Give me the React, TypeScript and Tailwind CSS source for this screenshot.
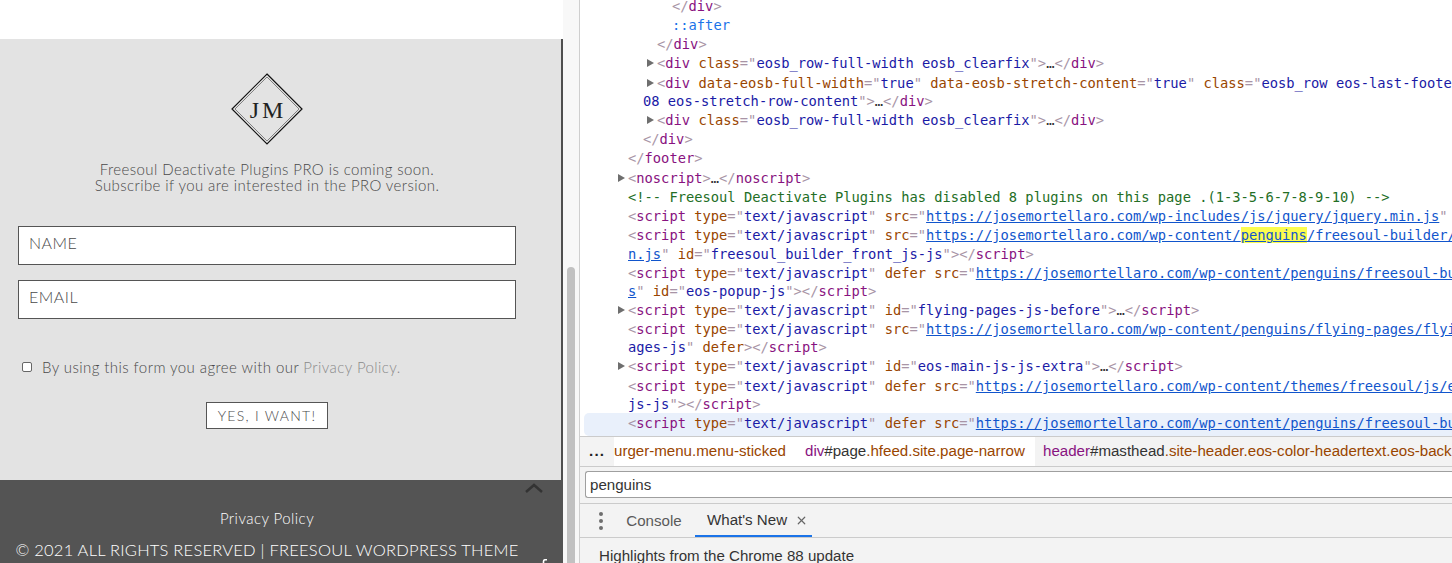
import { X } from 'lucide-react';

const T = ({ c, children }: { c: string; children: React.ReactNode }) => <span className={c}>{children}</span>;
const P = 'text-[#a894a6]';
const G = 'text-[#881280]';
const A = 'text-[#994500]';
const V = 'text-[#1a1aa6]';
const L = 'text-[#1155cc] underline';

type Row = { indent: number; arrow?: boolean; h: string; sel?: boolean; body: React.ReactNode };

const open = (tag: string) => (
  <>
    <T c={P}>&lt;</T>
    <T c={G}>{tag}</T>
  </>
);
const close = (tag: string) => (
  <>
    <T c={P}>&lt;/</T>
    <T c={G}>{tag}</T>
    <T c={P}>&gt;</T>
  </>
);
const attr = (n: string, v: React.ReactNode, tail = true) => (
  <>
    {' '}
    <T c={A}>{n}</T>
    <T c={P}>="</T>
    {v}
    {tail && <T c={P}>"</T>}
  </>
);
const val = (s: string) => <T c={V}>{s}</T>;
const link = (s: string) => <T c={L}>{s}</T>;
const endScript = (
  <>
    <T c={P}>&gt;&lt;/</T>
    <T c={G}>script</T>
    <T c={P}>&gt;</T>
  </>
);
const dots = (tag: string) => (
  <>
    <T c={P}>&gt;</T>
    <T c="text-[#333]">…</T>
    {close(tag)}
  </>
);
const scriptType = attr('type', val('text/javascript'));

const rows: Row[] = [
  // first line sits right under the top edge of the panel
  { indent: 672, h: 'h-[16px] leading-[12px]', body: close('div') },
  { indent: 672, h: 'h-[19px]', body: <T c="text-[#1a73e8]">::after</T> },
  { indent: 657, h: 'h-[19px]', body: close('div') },
  { indent: 657, arrow: true, h: 'h-[20px]', body: <>{open('div')}{attr('class', val('eosb_row-full-width eosb_clearfix'))}{dots('div')}</> },
  { indent: 657, arrow: true, h: 'h-[18px]', body: <>{open('div')}{attr('data-eosb-full-width', val('true'))}{attr('data-eosb-stretch-content', val('true'))}{attr('class', val('eosb_row eos-last-foote'), false)}</> },
  { indent: 643, h: 'h-[19px]', body: <>{val('08 eos-stretch-row-content')}<T c={P}>"</T>{dots('div')}</> },
  { indent: 657, arrow: true, h: 'h-[19px]', body: <>{open('div')}{attr('class', val('eosb_row-full-width eosb_clearfix'))}{dots('div')}</> },
  { indent: 643, h: 'h-[19px]', body: close('div') },
  { indent: 628, h: 'h-[20px]', body: close('footer') },
  { indent: 628, arrow: true, h: 'h-[19px]', body: <>{open('noscript')}{dots('noscript')}</> },
  { indent: 628, h: 'h-[19px]', body: <T c="text-[#236e25]">&lt;!-- Freesoul Deactivate Plugins has disabled 8 plugins on this page .(1-3-5-6-7-8-9-10) --&gt;</T> },
  { indent: 628, h: 'h-[19px]', body: <>{open('script')}{scriptType}{attr('src', link('https://josemortellaro.com/wp-includes/js/jquery/jquery.min.js'))}</> },
  { indent: 628, h: 'h-[19px]', body: <>{open('script')}{scriptType}{attr('src', <T c={L}>https://josemortellaro.com/wp-content/<span className="bg-[#fcfc4e]">penguins</span>/freesoul-builder/</T>, false)}</> },
  { indent: 628, h: 'h-[19px]', body: <>{link('n.js')}<T c={P}>"</T>{attr('id', val('freesoul_builder_front_js-js'))}{endScript}</> },
  { indent: 628, h: 'h-[18px]', body: <>{open('script')}{scriptType} <T c={A}>defer</T>{attr('src', link('https://josemortellaro.com/wp-content/penguins/freesoul-bu'), false)}</> },
  { indent: 628, h: 'h-[19px]', body: <>{link('s')}<T c={P}>"</T>{attr('id', val('eos-popup-js'))}{endScript}</> },
  { indent: 628, arrow: true, h: 'h-[19px]', body: <>{open('script')}{scriptType}{attr('id', val('flying-pages-js-before'))}{dots('script')}</> },
  { indent: 628, h: 'h-[18px]', body: <>{open('script')}{scriptType}{attr('src', link('https://josemortellaro.com/wp-content/penguins/flying-pages/flyi'), false)}</> },
  { indent: 628, h: 'h-[19px]', body: <>{val('ages-js')}<T c={P}>"</T> <T c={A}>defer</T>{endScript}</> },
  { indent: 628, arrow: true, h: 'h-[20px]', body: <>{open('script')}{scriptType}{attr('id', val('eos-main-js-js-extra'))}{dots('script')}</> },
  { indent: 628, h: 'h-[18px]', body: <>{open('script')}{scriptType} <T c={A}>defer</T>{attr('src', link('https://josemortellaro.com/wp-content/themes/freesoul/js/e'), false)}</> },
  { indent: 628, h: 'h-[18px]', body: <>{val('js-js')}<T c={P}>"</T>{endScript}</> },
  { indent: 628, sel: true, h: 'h-[23px]', body: <>{open('script')}{scriptType} <T c={A}>defer</T>{attr('src', link('https://josemortellaro.com/wp-content/penguins/freesoul-bu'), false)}</> },
];

function SourceRow({ row }: { row: Row }) {
  return (
    <div
      className={`relative whitespace-pre shrink-0 ${row.h} ${row.sel ? 'bg-[#e9f0fb] rounded-l-[5px] ml-[4px] pt-[1px]' : ''}`}
      style={{ paddingLeft: row.indent - (row.sel ? 584 : 580) }}
    >
      {row.arrow && (
        <span className="absolute top-[5px] border-y-[4px] border-l-[7px] border-y-transparent border-l-[#6e6e6e]" style={{ left: row.indent - 590 }} />
      )}
      {row.body}
    </div>
  );
}

function PagePane() {
  return (
    <div className="w-[563px] shrink-0 flex flex-col bg-white font-['Lato',sans-serif] font-light">
      <div className="h-[39px] shrink-0 bg-white" />
      <div className="h-[441px] shrink-0 bg-[#e3e3e3] border-r-2 border-[#4f4f4f]">
        <div className="w-[534px] flex flex-col">
          <div className="flex justify-center pt-[34px]">
            <svg width="72" height="72" viewBox="0 0 72 72" className="block">
              <path d="M36 1 L71 36 L36 71 L1 36 Z" fill="none" stroke="#111" strokeWidth="1.2" />
              <path d="M36 4 L68 36 L36 68 L4 36 Z" fill="none" stroke="#555" strokeWidth="0.7" />
              <text x="37" y="45" textAnchor="middle" fontFamily="Liberation Serif" fontSize="24" letterSpacing="3" fill="#222">
                JM
              </text>
            </svg>
          </div>
          <div className="mt-[16px] text-center text-[15px] leading-[16px] tracking-[0.41px] text-[#4a4a4a]">
            <p>Freesoul Deactivate Plugins PRO is coming soon.</p>
            <p>Subscribe if you are interested in the PRO version.</p>
          </div>
          <div className="mt-[33px] ml-[18px] w-[498px] h-[39px] border border-[#555] bg-white px-[10px] pb-[5px] flex items-center text-[16px] tracking-[0.5px] text-[#4a4a4a]">NAME</div>
          <div className="mt-[15px] ml-[18px] w-[498px] h-[39px] border border-[#555] bg-white px-[10px] pb-[5px] flex items-center text-[16px] tracking-[0.5px] text-[#4a4a4a]">EMAIL</div>
          <div className="mt-[38px] ml-[22px] flex items-center h-[20px] text-[15px] tracking-[0.43px] text-[#4a4a4a]">
            <span className="w-[10px] h-[10px] border border-[#666] rounded-[2px] bg-white shrink-0" />
            <span className="ml-[10px]">
              By using this form you agree with our <span className="text-[#8a8a8a]">Privacy Policy.</span>
            </span>
          </div>
          <div className="mt-[25px] self-center w-[122px] h-[27px] border border-[#555] bg-white flex items-center justify-center text-[14px] tracking-[1.3px] text-[#4a4a4a]">
            YES, I WANT!
          </div>
        </div>
      </div>
      <div className="relative flex-1 bg-[#545454] text-white overflow-hidden">
        <svg width="18" height="12" viewBox="0 0 18 12" className="absolute left-[525px] top-[2px]">
          <path d="M1 10 L9 3 L17 10" fill="none" stroke="#333" strokeWidth="2.5" />
        </svg>
        <svg width="6" height="5" viewBox="0 0 6 5" className="absolute left-[542px] top-[79px]">
          <path d="M1.5 5 V2.5 Q1.5 0.7 3.5 0.7 H5" fill="none" stroke="#fff" strokeWidth="1.6" />
        </svg>
        <div className="w-[534px] text-center">
          <p className="pt-[29px] text-[15px] leading-[18px] tracking-[0.45px]">Privacy Policy</p>
          <p className="mt-[14px] text-[16.5px] leading-[18px] tracking-[0.23px] whitespace-nowrap">© 2021 ALL RIGHTS RESERVED | FREESOUL WORDPRESS THEME</p>
        </div>
      </div>
    </div>
  );
}

function Scrollbar() {
  return (
    <div className="w-[17px] shrink-0 bg-[#f8f8f8] border-r border-[#cfcfcf] flex flex-col">
      <div className="h-[267px] shrink-0" />
      <div className="flex-1 ml-[4px] w-[8px] bg-[#c1c1c1] rounded-t-[4px]" />
    </div>
  );
}

function DevTools() {
  return (
    <div className="flex-1 min-w-0 flex flex-col overflow-hidden bg-white">
      <div className="h-[436px] shrink-0 overflow-hidden flex flex-col font-['DejaVu_Sans_Mono',monospace] text-[13.75px] leading-[18px] text-[#333]">
        {rows.map((r, i) => (
          <SourceRow key={i} row={r} />
        ))}
      </div>
      <div className="h-[31px] shrink-0 border-y border-[#cbcbcb] flex items-center font-['Liberation_Sans',sans-serif] text-[15.1px] whitespace-nowrap overflow-hidden">
        <div className="w-[34px] h-full shrink-0 bg-[#f3f3f3] pl-[9px] flex items-center font-bold text-[#222] tracking-[1.2px]">...</div>
        <div className="w-[421px] h-full shrink-0 flex items-center bg-white">
          <span className="text-[#994500]">urger-menu.menu-sticked</span>
          <span className="ml-[19px] text-[#881280]">div</span>
          <span className="text-[#333]">#page</span>
          <span className="text-[#994500]">.hfeed.site.page-narrow</span>
        </div>
        <div className="flex-1 min-w-0 h-full bg-[#f3f3f3] flex items-center pl-[8px] overflow-hidden">
          <span className="text-[#881280]">header</span>
          <span className="text-[#333]">#masthead</span>
          <span className="text-[#994500]">.site-header.eos-color-headertext.eos-back</span>
        </div>
      </div>
      <div className="h-[37px] shrink-0 bg-[#f3f3f3] border-b border-[#cbcbcb] pl-[5px] pt-[4px]">
        <div className="h-[27px] bg-white border border-[#9f9f9f] rounded-l-[3px] border-r-0 flex items-center pl-[4px] pt-[1px] font-['Liberation_Sans',sans-serif] text-[15.1px] text-[#333]">penguins</div>
      </div>
      <div className="h-[34px] shrink-0 bg-[#f3f3f3] border-b border-[#cbcbcb] flex items-stretch font-['Liberation_Sans',sans-serif] text-[15.1px]">
        <div className="w-[35px] flex flex-col items-center justify-center gap-[3px] pl-[7px]">
          <span className="w-[4px] h-[4px] rounded-full bg-[#6e6e6e]" />
          <span className="w-[4px] h-[4px] rounded-full bg-[#6e6e6e]" />
          <span className="w-[4px] h-[4px] rounded-full bg-[#6e6e6e]" />
        </div>
        <div className="w-[80px] pt-[1px] pr-[2px] flex items-center justify-center text-[#5a5a5a]">Console</div>
        <div className="w-[117px] pt-[1px] pl-[12px] flex items-center gap-[8px] text-[#333] border-b-2 border-[#1a73e8]">
          What's New
          <X size={13} strokeWidth={2.2} className="text-[#666]" />
        </div>
      </div>
      <div className="flex-1 bg-[#f3f3f3] pl-[19px] pt-[7px] font-['Liberation_Sans',sans-serif] text-[15.1px] text-[#333]">Highlights from the Chrome 88 update</div>
    </div>
  );
}

export default function App() {
  return (
    <div className="w-[1452px] h-[563px] flex overflow-hidden bg-white">
      <PagePane />
      <Scrollbar />
      <DevTools />
    </div>
  );
}
